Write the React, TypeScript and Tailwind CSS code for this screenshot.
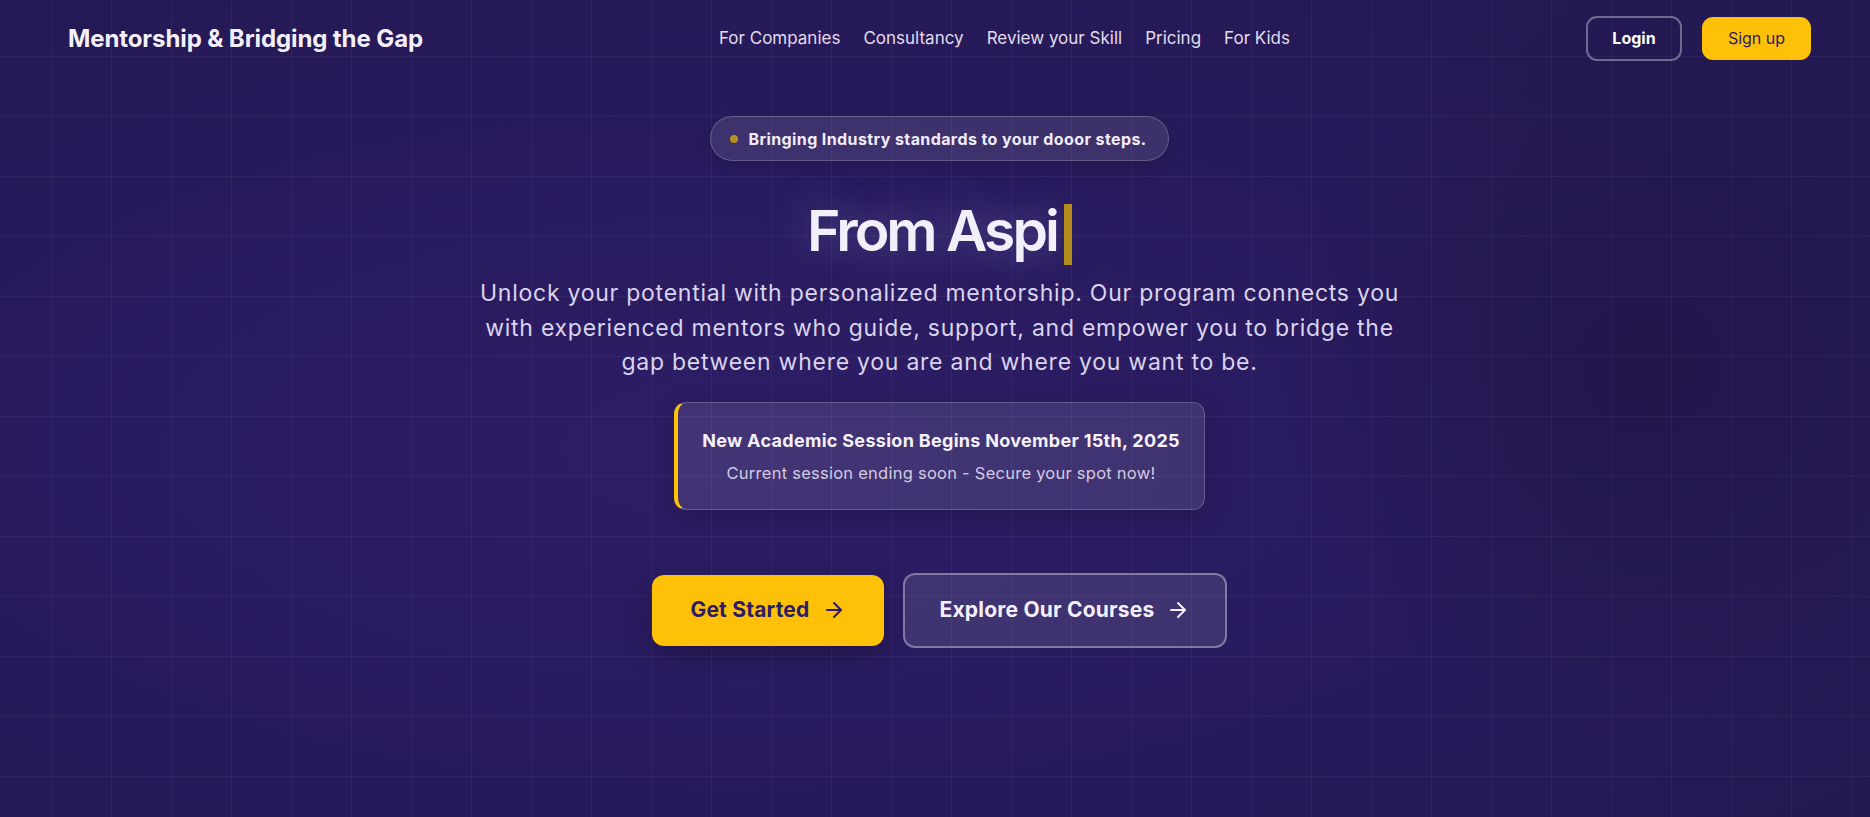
import { ArrowRight } from 'lucide-react';

const navLinks = ['For Companies', 'Consultancy', 'Review your Skill', 'Pricing', 'For Kids'];

export default function App() {
  return (
    <div
      className="relative min-h-screen w-full overflow-hidden bg-[#271b5b] text-white"
      style={{ fontFamily: 'Inter, "Noto Sans", sans-serif' }}
    >
      {/* background glow + grid */}
      <div className="pointer-events-none absolute inset-0 bg-[radial-gradient(ellipse_at_40%_55%,#2d1d66_0%,#291b5f_40%,#231850_100%)]" />
      <div className="pointer-events-none absolute inset-0 bg-[radial-gradient(circle_at_88%_45%,rgba(30,18,60,0.55)_0%,rgba(30,18,60,0)_22%)]" />
      <div className="pointer-events-none absolute inset-0 bg-[linear-gradient(to_right,rgba(255,255,255,0.045)_1px,transparent_1px),linear-gradient(to_bottom,rgba(255,255,255,0.045)_1px,transparent_1px)] bg-[size:60px_60px] bg-[position:51px_56px]" />

      <div className="relative">
        {/* Header */}
        <header className="flex h-[76px] items-center justify-between pl-[68px] pr-[59px]">
          <div className="pt-[2px] text-[24px] font-bold tracking-[-0.1px] text-[#f4f0fb]">Mentorship &amp; Bridging the Gap</div>
          <nav className="flex items-center gap-[23px] pt-[2px]">
            {navLinks.map(link => (
              <a key={link} className="text-[17px] text-[#e2dcee]">
                {link}
              </a>
            ))}
          </nav>
          <div className="flex items-center gap-5">
            <button className="h-[45px] w-[96px] rounded-[11px] border-2 border-white/35 text-[16px] font-bold text-white">
              Login
            </button>
            <button className="h-[43px] w-[109px] rounded-[11px] bg-[#ffc107] text-[16px] text-[#2d1b69]">
              Sign up
            </button>
          </div>
        </header>

        {/* Hero */}
        <main className="flex flex-col items-center pl-[9px]">
          <div className="mt-[40px] flex h-[45px] items-center gap-2.5 rounded-full border border-white/20 bg-white/10 pl-[19px] pr-[21px] shadow-[0_4px_16px_rgba(0,0,0,0.15)]">
            <span className="h-2 w-2 rounded-full bg-[#b8901c]" />
            <span className="text-[16px] font-bold tracking-[0.4px] text-[#f1ecf9]">
              Bringing Industry standards to your dooor steps.
            </span>
          </div>

          <h1 className="mt-[35px] flex h-[70px] items-center text-[57px] font-semibold leading-[70px] tracking-[-3px] text-[#f2eefa] [text-shadow:0_0_40px_rgba(200,185,255,0.35)]">
            From Aspi
            <span className="ml-[7px] mt-[7px] inline-block h-[61px] w-2 bg-[#b58d1f]" />
          </h1>

          <p className="mt-[10px] text-center text-[23px] leading-[34.5px] tracking-[0.75px] text-[#dad3ec]">
            Unlock your potential with personalized mentorship. Our program connects you
            <br />
            with experienced mentors who guide, support, and empower you to bridge the
            <br />
            gap between where you are and where you want to be.
          </p>

          <div className="mt-[22px] w-[531px] rounded-xl border border-white/20 border-l-4 border-l-[#ffc107] bg-white/10 px-5 pb-6 pt-6 text-center shadow-[0_8px_24px_rgba(0,0,0,0.18)]">
            <div className="text-[18px] font-bold leading-[28px] tracking-[0.3px] text-[#f5f1fc]">
              New Academic Session Begins November 15th, 2025
            </div>
            <div className="mt-1.5 text-[16.5px] leading-[24px] tracking-[0.25px] text-[#d3cbe3]">
              Current session ending soon - Secure your spot now!
            </div>
          </div>

          <div className="mt-[63px] flex items-center gap-[19px]">
            <button className="flex h-[71px] w-[232px] items-center justify-center gap-3 rounded-xl bg-[#ffc107] text-[21px] font-bold tracking-[0.2px] text-[#2d1b69] shadow-[0_8px_24px_rgba(0,0,0,0.25)]">
              Get Started
              <ArrowRight className="h-6 w-6" strokeWidth={2} />
            </button>
            <button className="flex h-[75px] w-[324px] items-center justify-center gap-3 rounded-xl border-2 border-white/35 bg-white/10 text-[21px] font-bold tracking-[0.2px] text-[#f4f0fb]">
              Explore Our Courses
              <ArrowRight className="h-6 w-6" strokeWidth={2} />
            </button>
          </div>
        </main>
      </div>
    </div>
  );
}
